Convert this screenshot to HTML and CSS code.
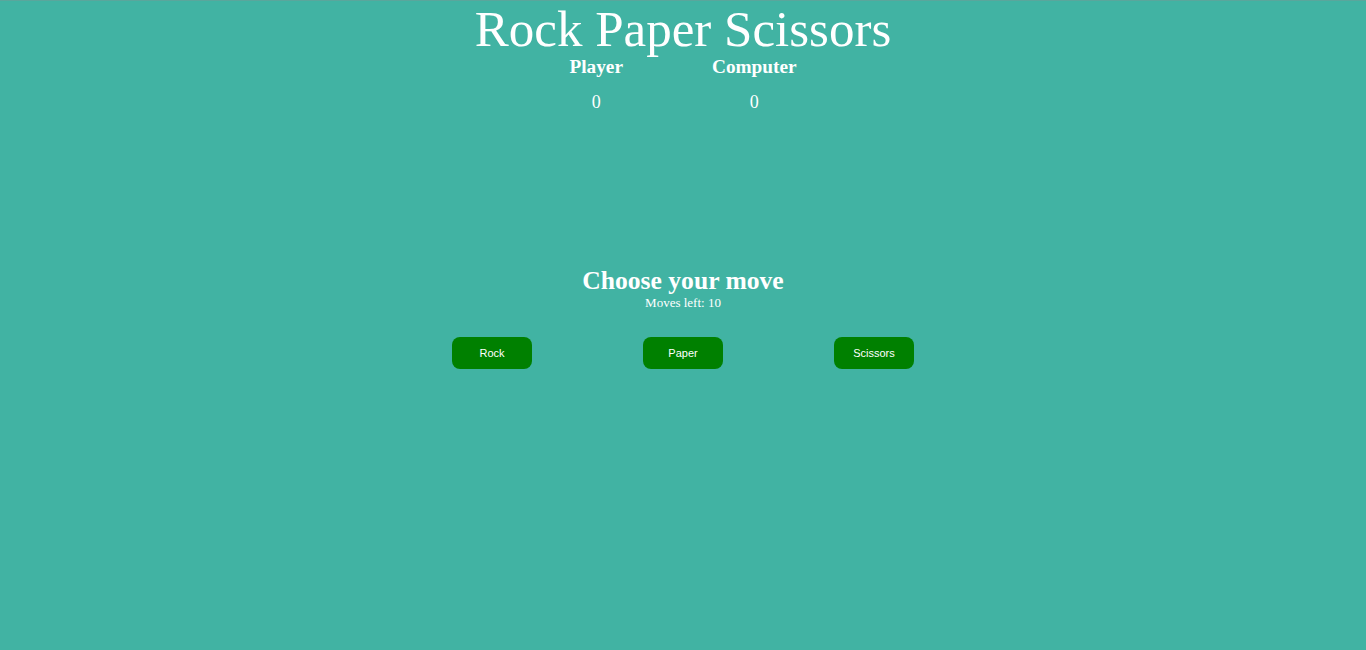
FILE: index.html
```html
<!DOCTYPE html>
<html>
<head>
<meta charset="utf-8">
<title>Rock Paper Scissors</title>
<link rel="stylesheet" href="styles.css">
</head>
<body>
  <main class="game">
    <h1 class="title">Rock Paper Scissors</h1>
    <div class="scoreboard">
      <div class="score-col">
        <h3 class="score-label">Player</h3>
        <p class="score-value">0</p>
      </div>
      <div class="score-col">
        <h3 class="score-label">Computer</h3>
        <p class="score-value">0</p>
      </div>
    </div>
    <section class="prompt">
      <h2 class="prompt-title">Choose your move</h2>
      <p class="moves-left">Moves left: 10</p>
    </section>
    <div class="choices">
      <button class="choice">Rock</button>
      <button class="choice">Paper</button>
      <button class="choice">Scissors</button>
    </div>
  </main>
</body>
</html>
```
FILE: styles.css
```css
html, body {
  margin: 0;
  padding: 0;
  height: 100%;
}
body {
  background: #41b3a3;
  color: #ffffff;
  font-family: "Liberation Serif", "Times New Roman", serif;
  border-top: 1px solid #5aa69c;
  box-sizing: border-box;
}
.game {
  display: flex;
  flex-direction: column;
  align-items: center;
}
.title {
  margin: 1px 0 0 0;
  font-size: 51px;
  font-weight: normal;
  line-height: 54px;
}
.scoreboard {
  display: flex;
  gap: 89px;
}
.score-col {
  display: flex;
  flex-direction: column;
  align-items: center;
}
.score-label {
  margin: 0;
  font-size: 19.3px;
  line-height: 22px;
  font-weight: bold;
}
.score-value {
  margin: 13px 0 0 0;
  font-size: 18px;
  line-height: 22px;
}
.prompt {
  margin-top: 154px;
  display: flex;
  flex-direction: column;
  align-items: center;
}
.prompt-title {
  margin: 0;
  font-size: 25.6px;
  line-height: 28px;
  font-weight: bold;
}
.moves-left {
  margin: 0;
  font-size: 13px;
  line-height: 16px;
}
.choices {
  margin-top: 26px;
  display: flex;
  gap: 111px;
}
.choice {
  width: 80px;
  height: 32px;
  border: none;
  border-radius: 8px;
  background: #008000;
  color: #ffffff;
  font-family: "Liberation Sans", Arial, sans-serif;
  font-size: 11px;
  padding: 0;
}
```
